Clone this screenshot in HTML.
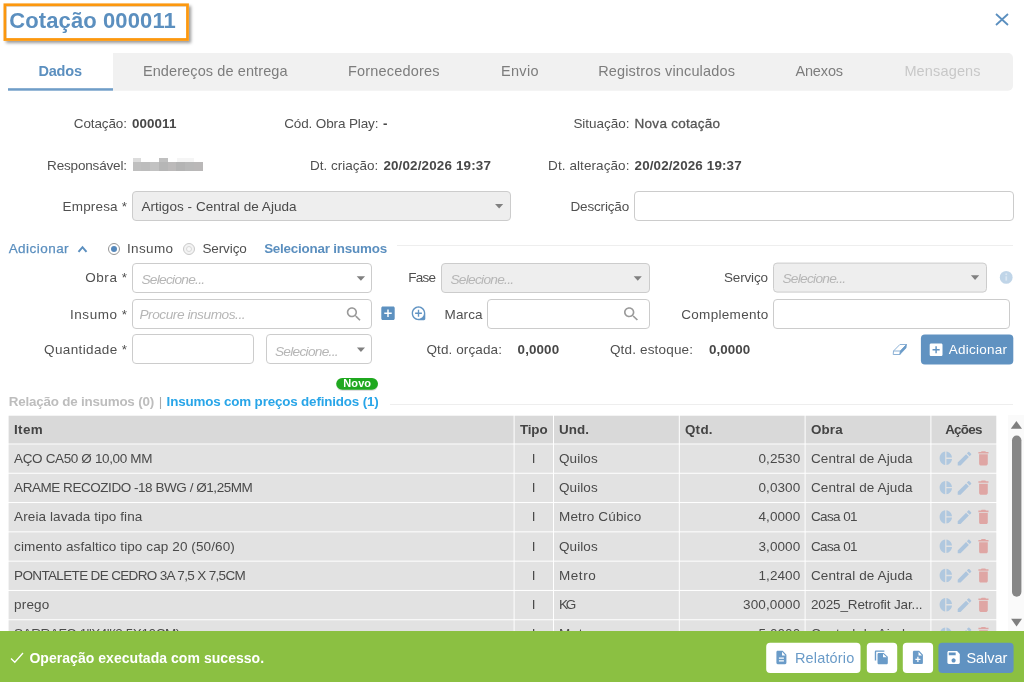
<!DOCTYPE html>
<html lang="pt-BR">
<head>
<meta charset="utf-8">
<title>Cotação 000011</title>
<style>
*{box-sizing:border-box;margin:0;padding:0}
html,body{width:1024px;height:682px;overflow:hidden;background:#fff}
body{position:relative;font-family:"Liberation Sans","DejaVu Sans",sans-serif;font-size:13px;color:#4a4a4a}
.a{position:absolute}
.t{position:absolute;white-space:nowrap;line-height:20px;height:20px}
.focus{left:4px;top:4px;width:185px;height:37px;box-shadow:2px 2px 3px rgba(0,0,0,.4)}
.inp{position:absolute;height:30px;border:1px solid #ccc;border-radius:4px;background:#fff}
.dis{background:#eee}
.hr{position:absolute;height:1px;background:#eee}
.footer{left:0;top:631px;width:1024px;height:51px;background:#8bc042}
</style>
</head>
<body>
<div id="root" style="position:absolute;left:0;top:0;width:1024px;height:682px;will-change:transform">

<!-- header -->
<div class="a focus"></div>
<svg class="a" style="left:0;top:0" width="200" height="50" viewBox="0 0 200 50"><rect x="4.900" y="4.800" width="182.600" height="34.700" fill="#fff" stroke="#fc980f" stroke-width="2.800"/><path d="M6.400 38 V6.500 H186" fill="none" stroke="rgba(0,0,0,.10)" stroke-width="1"/></svg>
<svg class="a" style="left:995px;top:13px" width="14" height="13" viewBox="0 0 14 13"><path d="M1 1 L13 12 M13 1 L1 12" stroke="#5b8fbf" stroke-width="1.8" fill="none"/></svg>

<!-- tabs -->
<svg class="a" style="left:0;top:40px" width="1024" height="60" viewBox="0 40 1024 60"><path d="M113 53.100 H1008 a5 5 0 0 1 5 5 V85.700 a5 5 0 0 1 -5 5 H113 Z" fill="#f1f1f1"/><rect x="8" y="88.200" width="105" height="2.500" fill="#6f9dc8"/></svg>

<!-- redacted name -->
<div class="a" style="left:133px;top:162px;width:70px;height:9px;background:linear-gradient(90deg,#bfbfbf 0 12%,#bdbdbd 12% 25%,#c2c2c2 25% 37%,#b6b6b6 37% 50%,#bcbaba 50% 62%,#b4b4b4 62% 75%,#b8b8b8 75% 87%,#bab8b8 87%)"></div>
<div class="a" style="left:133px;top:158px;width:8px;height:4px;background:#dcdcdc"></div>
<div class="a" style="left:159px;top:158px;width:9px;height:4px;background:#c0c0c0"></div>
<div class="a" style="left:177px;top:158px;width:17px;height:4px;background:#f5f5f5"></div>

<!-- row 3 -->
<div class="inp dis" style="left:132px;top:190.500px;width:379px"></div>
<div class="inp" style="left:634px;top:190.500px;width:380px"></div>

<!-- adicionar section -->
<div class="hr" style="left:397px;top:245px;width:616px"></div>
<svg class="a" style="left:77px;top:244px" width="11" height="10" viewBox="0 0 11 10"><path d="M1.500 7.800 L5.500 3.200 L9.500 7.800" stroke="#5b8fbf" stroke-width="2" fill="none"/></svg>
<div class="a" style="left:108px;top:243px;width:12px;height:12px;border:1px solid #959595;border-radius:50%;background:#fff"></div>
<div class="a" style="left:111px;top:246px;width:6px;height:6px;border-radius:50%;background:#5588bb"></div>
<div class="a" style="left:183px;top:243px;width:12px;height:12px;border:1px solid #c8c8c8;border-radius:50%;background:#f3f3f3"></div>
<div class="a" style="left:186px;top:246px;width:6px;height:6px;border:1px solid #d8d8d8;border-radius:50%;background:#f8f8f8"></div>

<!-- obra row -->
<div class="inp" style="left:132px;top:263px;width:240px"></div>
<div class="inp dis" style="left:441px;top:263px;width:209px"></div>
<svg class="a" style="left:770px;top:258px" width="222" height="40" viewBox="770 258 222 40"><rect x="773.500" y="263.100" width="213" height="29" rx="3.500" fill="#eee" stroke="#ccc" stroke-width="1"/></svg>

<!-- insumo row -->
<div class="inp" style="left:132px;top:299px;width:240px"></div>
<div class="inp" style="left:487px;top:299px;width:163px"></div>
<div class="inp" style="left:773px;top:299px;width:237px"></div>

<!-- quantidade row -->
<div class="inp" style="left:132px;top:334px;width:122px"></div>
<div class="inp" style="left:266px;top:334px;width:106px"></div>

<svg class="a" style="left:0;top:0" width="1024" height="400" viewBox="0 0 1024 400">
<path transform="matrix(0.7444 0 0 0.7556 379.067 304.233)" d="M19 3H5c-1.110 0-2 .900-2 2v14c0 1.100.890 2 2 2h14c1.100 0 2-.900 2-2V5c0-1.100-.900-2-2-2zm-2 10h-4v4h-2v-4H7v-2h4V7h2v4h4v2z" fill="#5d91c0"/>
<path transform="matrix(0.6800 0 0 0.6950 410.340 304.910)" d="M13 7h-2v4H7v2h4v4h2v-4h4v-2h-4V7zm-1-5C6.490 2 2 6.490 2 12s4.490 10 10 10h8c1.100 0 2-.900 2-2v-8c0-5.510-4.490-10-10-10zm0 18c-4.410 0-8-3.590-8-8s3.590-8 8-8 8 3.590 8 8-3.590 8-8 8z" fill="#6194c3"/>
<path transform="matrix(0.7890 0 0 0.7776 344.433 304.867)" d="M15.500 14h-.790l-.280-.270C15.410 12.590 16 11.110 16 9.500 16 5.910 13.090 3 9.500 3S3 5.910 3 9.500 5.910 16 9.500 16c1.610 0 3.090-.590 4.230-1.570l.270.280v.790l5 4.990L20.490 19l-4.990-5zm-6 0C7.010 14 5 11.990 5 9.500S7.010 5 9.500 5 14 7.010 14 9.500 11.990 14 9.500 14z" fill="#9a9a9a"/>
<path transform="matrix(0.8005 0 0 0.7662 621.599 304.902)" d="M15.500 14h-.790l-.280-.270C15.410 12.590 16 11.110 16 9.500 16 5.910 13.090 3 9.500 3S3 5.910 3 9.500 5.910 16 9.500 16c1.610 0 3.090-.590 4.230-1.570l.270.280v.790l5 4.990L20.490 19l-4.990-5zm-6 0C7.010 14 5 11.990 5 9.500S7.010 5 9.500 5 14 7.010 14 9.500 11.990 14 9.500 14z" fill="#9a9a9a"/>
<rect x="920.9" y="334.4" width="92.4" height="30.1" rx="4" fill="#6092c1"/>
<path transform="matrix(0.7111 0 0 0.7056 927.567 341.283)" d="M19 3H5c-1.110 0-2 .900-2 2v14c0 1.100.890 2 2 2h14c1.100 0 2-.900 2-2V5c0-1.100-.900-2-2-2zm-2 10h-4v4h-2v-4H7v-2h4V7h2v4h4v2z" fill="#fff"/>
<path d="M899.90 344.50 L906.50 344.50 L900.40 351.00 L893.50 351.00 Z M893.50 351.00 L893.20 354.50 L899.90 354.50 L900.40 351.00" fill="none" stroke="#8db2d6" stroke-width="1" stroke-linejoin="round"/>
<path d="M906.50 344.50 L906.10 347.90 L899.90 354.50 L900.40 351.00 Z" fill="#6a9bc8" stroke="#6a9bc8" stroke-width=".6" stroke-linejoin="round"/>
<path d="M495.05 204.05 H503.20 L499.12 208.55 Z" fill="#808080"/>
<path d="M356.70 276.20 H365.10 L360.90 280.80 Z" fill="#808080"/>
<path d="M633.70 276.15 H641.80 L637.75 280.80 Z" fill="#808080"/>
<path d="M970.90 275.20 H979.20 L975.05 279.90 Z" fill="#808080"/>
<path d="M356.90 347.60 H365.00 L360.95 352.10 Z" fill="#808080"/>
<circle cx="1006.2" cy="277.4" r="6.4" fill="#c0d5e8"/><rect x="1005.4" y="276.3" width="1.7" height="4.3" fill="#dbe7f2"/><circle cx="1006.25" cy="274.3" r="1" fill="#dbe7f2"/>
</svg>

<!-- list header -->
<svg class="a" style="left:330px;top:372px" width="54" height="24" viewBox="330 372 54 24"><rect x="336.400" y="379" width="41.600" height="12" rx="6" fill="rgba(0,0,0,.13)"/><rect x="336.200" y="377.900" width="41.800" height="11.900" rx="5.950" fill="#1fa81f"/></svg>
<div class="hr" style="left:390px;top:404px;width:623px"></div>

<!-- grid -->
<svg class="a" style="left:0;top:0" width="1024" height="682" viewBox="0 0 1024 682">
<rect x="8.6" y="415.7" width="505.0" height="27.8" fill="#d9d9d9"/>
<rect x="514.6" y="415.7" width="38.4" height="27.8" fill="#d9d9d9"/>
<rect x="554.0" y="415.7" width="124.8" height="27.8" fill="#d9d9d9"/>
<rect x="679.8" y="415.7" width="124.8" height="27.8" fill="#d9d9d9"/>
<rect x="805.6" y="415.7" width="124.8" height="27.8" fill="#d9d9d9"/>
<rect x="931.4" y="415.7" width="64.9" height="27.8" fill="#d9d9d9"/>
<rect x="8.6" y="444.45" width="505.0" height="28.3" fill="#e2e2e2"/>
<rect x="514.6" y="444.45" width="38.4" height="28.3" fill="#e2e2e2"/>
<rect x="554.0" y="444.45" width="124.8" height="28.3" fill="#e2e2e2"/>
<rect x="679.8" y="444.45" width="124.8" height="28.3" fill="#e2e2e2"/>
<rect x="805.6" y="444.45" width="124.8" height="28.3" fill="#e2e2e2"/>
<rect x="931.4" y="444.45" width="64.9" height="28.3" fill="#e2e2e2"/>
<path transform="matrix(0.6200 0 0 0.6700 938.360 450.260)" d="M11 2v20c-5.070-.500-9-4.790-9-10s3.930-9.500 9-10zm2.030 0v8.990H22c-.470-4.740-4.240-8.520-8.970-8.990zm0 11.010V22c4.740-.470 8.500-4.250 8.970-8.990h-8.970z" fill="#b0c8df"/>
<path transform="matrix(0.7556 0 0 0.7611 955.433 449.417)" d="M3 17.250V21h3.750L17.810 9.940l-3.750-3.750L3 17.250zM20.710 7.040c.390-.390.390-1.020 0-1.410l-2.340-2.340c-.390-.390-1.020-.390-1.410 0l-1.830 1.830 3.750 3.750 1.830-1.830z" fill="#adc5dd"/>
<path transform="matrix(0.7214 0 0 0.7889 974.793 448.833)" d="M6 19c0 1.100.900 2 2 2h8c1.100 0 2-.900 2-2V7H6v12zM19 4h-3.500l-1-1h-5l-1 1H5v2h14V4z" fill="#dfa6a4"/>
<rect x="8.6" y="473.75" width="505.0" height="28.3" fill="#e2e2e2"/>
<rect x="514.6" y="473.75" width="38.4" height="28.3" fill="#e2e2e2"/>
<rect x="554.0" y="473.75" width="124.8" height="28.3" fill="#e2e2e2"/>
<rect x="679.8" y="473.75" width="124.8" height="28.3" fill="#e2e2e2"/>
<rect x="805.6" y="473.75" width="124.8" height="28.3" fill="#e2e2e2"/>
<rect x="931.4" y="473.75" width="64.9" height="28.3" fill="#e2e2e2"/>
<path transform="matrix(0.6200 0 0 0.6700 938.360 479.560)" d="M11 2v20c-5.070-.500-9-4.790-9-10s3.930-9.500 9-10zm2.030 0v8.990H22c-.470-4.740-4.240-8.520-8.970-8.990zm0 11.010V22c4.740-.470 8.500-4.250 8.970-8.990h-8.970z" fill="#b0c8df"/>
<path transform="matrix(0.7556 0 0 0.7611 955.433 478.717)" d="M3 17.250V21h3.750L17.810 9.940l-3.750-3.750L3 17.250zM20.710 7.040c.390-.390.390-1.020 0-1.410l-2.340-2.340c-.390-.390-1.020-.390-1.410 0l-1.830 1.830 3.750 3.750 1.830-1.830z" fill="#adc5dd"/>
<path transform="matrix(0.7214 0 0 0.7889 974.793 478.133)" d="M6 19c0 1.100.900 2 2 2h8c1.100 0 2-.900 2-2V7H6v12zM19 4h-3.500l-1-1h-5l-1 1H5v2h14V4z" fill="#dfa6a4"/>
<rect x="8.6" y="503.05" width="505.0" height="28.3" fill="#e2e2e2"/>
<rect x="514.6" y="503.05" width="38.4" height="28.3" fill="#e2e2e2"/>
<rect x="554.0" y="503.05" width="124.8" height="28.3" fill="#e2e2e2"/>
<rect x="679.8" y="503.05" width="124.8" height="28.3" fill="#e2e2e2"/>
<rect x="805.6" y="503.05" width="124.8" height="28.3" fill="#e2e2e2"/>
<rect x="931.4" y="503.05" width="64.9" height="28.3" fill="#e2e2e2"/>
<path transform="matrix(0.6200 0 0 0.6700 938.360 508.860)" d="M11 2v20c-5.070-.500-9-4.790-9-10s3.930-9.500 9-10zm2.030 0v8.990H22c-.470-4.740-4.240-8.520-8.970-8.990zm0 11.010V22c4.740-.470 8.500-4.250 8.970-8.990h-8.970z" fill="#b0c8df"/>
<path transform="matrix(0.7556 0 0 0.7611 955.433 508.017)" d="M3 17.250V21h3.750L17.810 9.940l-3.750-3.750L3 17.250zM20.710 7.040c.390-.390.390-1.020 0-1.410l-2.340-2.340c-.390-.390-1.020-.390-1.410 0l-1.830 1.830 3.750 3.750 1.830-1.830z" fill="#adc5dd"/>
<path transform="matrix(0.7214 0 0 0.7889 974.793 507.433)" d="M6 19c0 1.100.900 2 2 2h8c1.100 0 2-.900 2-2V7H6v12zM19 4h-3.500l-1-1h-5l-1 1H5v2h14V4z" fill="#dfa6a4"/>
<rect x="8.6" y="532.35" width="505.0" height="28.3" fill="#e2e2e2"/>
<rect x="514.6" y="532.35" width="38.4" height="28.3" fill="#e2e2e2"/>
<rect x="554.0" y="532.35" width="124.8" height="28.3" fill="#e2e2e2"/>
<rect x="679.8" y="532.35" width="124.8" height="28.3" fill="#e2e2e2"/>
<rect x="805.6" y="532.35" width="124.8" height="28.3" fill="#e2e2e2"/>
<rect x="931.4" y="532.35" width="64.9" height="28.3" fill="#e2e2e2"/>
<path transform="matrix(0.6200 0 0 0.6700 938.360 538.160)" d="M11 2v20c-5.070-.500-9-4.790-9-10s3.930-9.500 9-10zm2.030 0v8.990H22c-.470-4.740-4.240-8.520-8.970-8.990zm0 11.010V22c4.740-.470 8.500-4.250 8.970-8.990h-8.970z" fill="#b0c8df"/>
<path transform="matrix(0.7556 0 0 0.7611 955.433 537.317)" d="M3 17.250V21h3.750L17.810 9.940l-3.750-3.750L3 17.250zM20.710 7.040c.390-.390.390-1.020 0-1.410l-2.340-2.340c-.390-.390-1.020-.390-1.410 0l-1.830 1.830 3.750 3.750 1.830-1.830z" fill="#adc5dd"/>
<path transform="matrix(0.7214 0 0 0.7889 974.793 536.733)" d="M6 19c0 1.100.900 2 2 2h8c1.100 0 2-.900 2-2V7H6v12zM19 4h-3.500l-1-1h-5l-1 1H5v2h14V4z" fill="#dfa6a4"/>
<rect x="8.6" y="561.65" width="505.0" height="28.3" fill="#e2e2e2"/>
<rect x="514.6" y="561.65" width="38.4" height="28.3" fill="#e2e2e2"/>
<rect x="554.0" y="561.65" width="124.8" height="28.3" fill="#e2e2e2"/>
<rect x="679.8" y="561.65" width="124.8" height="28.3" fill="#e2e2e2"/>
<rect x="805.6" y="561.65" width="124.8" height="28.3" fill="#e2e2e2"/>
<rect x="931.4" y="561.65" width="64.9" height="28.3" fill="#e2e2e2"/>
<path transform="matrix(0.6200 0 0 0.6700 938.360 567.460)" d="M11 2v20c-5.070-.500-9-4.790-9-10s3.930-9.500 9-10zm2.030 0v8.990H22c-.470-4.740-4.240-8.520-8.970-8.990zm0 11.010V22c4.740-.470 8.500-4.250 8.970-8.990h-8.970z" fill="#b0c8df"/>
<path transform="matrix(0.7556 0 0 0.7611 955.433 566.617)" d="M3 17.250V21h3.750L17.810 9.940l-3.750-3.750L3 17.250zM20.710 7.040c.390-.390.390-1.020 0-1.410l-2.340-2.340c-.390-.390-1.020-.390-1.410 0l-1.830 1.830 3.750 3.750 1.830-1.830z" fill="#adc5dd"/>
<path transform="matrix(0.7214 0 0 0.7889 974.793 566.033)" d="M6 19c0 1.100.900 2 2 2h8c1.100 0 2-.900 2-2V7H6v12zM19 4h-3.500l-1-1h-5l-1 1H5v2h14V4z" fill="#dfa6a4"/>
<rect x="8.6" y="590.95" width="505.0" height="28.3" fill="#e2e2e2"/>
<rect x="514.6" y="590.95" width="38.4" height="28.3" fill="#e2e2e2"/>
<rect x="554.0" y="590.95" width="124.8" height="28.3" fill="#e2e2e2"/>
<rect x="679.8" y="590.95" width="124.8" height="28.3" fill="#e2e2e2"/>
<rect x="805.6" y="590.95" width="124.8" height="28.3" fill="#e2e2e2"/>
<rect x="931.4" y="590.95" width="64.9" height="28.3" fill="#e2e2e2"/>
<path transform="matrix(0.6200 0 0 0.6700 938.360 596.760)" d="M11 2v20c-5.070-.500-9-4.790-9-10s3.930-9.500 9-10zm2.030 0v8.990H22c-.470-4.740-4.240-8.520-8.970-8.990zm0 11.010V22c4.740-.470 8.500-4.250 8.970-8.990h-8.970z" fill="#b0c8df"/>
<path transform="matrix(0.7556 0 0 0.7611 955.433 595.917)" d="M3 17.250V21h3.750L17.810 9.940l-3.750-3.750L3 17.250zM20.710 7.040c.390-.390.390-1.020 0-1.410l-2.340-2.340c-.390-.390-1.020-.390-1.410 0l-1.830 1.830 3.750 3.750 1.830-1.830z" fill="#adc5dd"/>
<path transform="matrix(0.7214 0 0 0.7889 974.793 595.333)" d="M6 19c0 1.100.900 2 2 2h8c1.100 0 2-.900 2-2V7H6v12zM19 4h-3.500l-1-1h-5l-1 1H5v2h14V4z" fill="#dfa6a4"/>
<rect x="8.6" y="620.25" width="505.0" height="28.3" fill="#e2e2e2"/>
<rect x="514.6" y="620.25" width="38.4" height="28.3" fill="#e2e2e2"/>
<rect x="554.0" y="620.25" width="124.8" height="28.3" fill="#e2e2e2"/>
<rect x="679.8" y="620.25" width="124.8" height="28.3" fill="#e2e2e2"/>
<rect x="805.6" y="620.25" width="124.8" height="28.3" fill="#e2e2e2"/>
<rect x="931.4" y="620.25" width="64.9" height="28.3" fill="#e2e2e2"/>
<path transform="matrix(0.6200 0 0 0.6700 938.360 626.060)" d="M11 2v20c-5.070-.500-9-4.790-9-10s3.930-9.500 9-10zm2.030 0v8.990H22c-.470-4.740-4.240-8.520-8.970-8.990zm0 11.010V22c4.740-.470 8.500-4.250 8.970-8.990h-8.970z" fill="#b0c8df"/>
<path transform="matrix(0.7556 0 0 0.7611 955.433 625.217)" d="M3 17.250V21h3.750L17.810 9.940l-3.750-3.750L3 17.250zM20.710 7.040c.390-.390.390-1.020 0-1.410l-2.340-2.340c-.390-.390-1.020-.390-1.410 0l-1.830 1.830 3.750 3.750 1.830-1.830z" fill="#adc5dd"/>
<path transform="matrix(0.7214 0 0 0.7889 974.793 624.633)" d="M6 19c0 1.100.900 2 2 2h8c1.100 0 2-.900 2-2V7H6v12zM19 4h-3.500l-1-1h-5l-1 1H5v2h14V4z" fill="#dfa6a4"/>
</svg>

<div class="t" style="left:9.20px;top:10.50px;font-size:22px;color:#5b8fbf;font-weight:bold;letter-spacing:0.115px;">Cotação 000011</div>
<div class="t" style="left:38.40px;top:61.00px;font-size:14.5px;color:#5b8fbf;font-weight:bold;letter-spacing:-0.182px;">Dados</div>
<div class="t" style="left:142.90px;top:61.00px;font-size:14.5px;color:#7d7d7d;letter-spacing:0.106px;">Endereços de entrega</div>
<div class="t" style="left:347.90px;top:61.00px;font-size:14.5px;color:#7d7d7d;letter-spacing:0.203px;">Fornecedores</div>
<div class="t" style="left:500.90px;top:61.00px;font-size:14.5px;color:#7d7d7d;letter-spacing:0.355px;">Envio</div>
<div class="t" style="left:598.20px;top:61.00px;font-size:14.5px;color:#7d7d7d;letter-spacing:0.153px;">Registros vinculados</div>
<div class="t" style="left:795.40px;top:61.00px;font-size:14.5px;color:#7d7d7d;letter-spacing:-0.135px;">Anexos</div>
<div class="t" style="left:904.40px;top:61.00px;font-size:14.5px;color:#c8c8c8;letter-spacing:0.154px;">Mensagens</div>
<div class="t" style="left:73.80px;top:113.50px;font-size:13.5px;color:#505050;letter-spacing:-0.121px;">Cotação:</div>
<div class="t" style="left:131.90px;top:113.50px;font-size:13.4px;color:#484848;font-weight:bold;letter-spacing:0.099px;">000011</div>
<div class="t" style="left:284.20px;top:113.50px;font-size:13.5px;color:#505050;letter-spacing:-0.132px;">Cód. Obra Play:</div>
<div class="t" style="left:382.90px;top:113.50px;font-size:13.4px;color:#484848;font-weight:bold;">-</div>
<div class="t" style="left:573.40px;top:113.50px;font-size:13.5px;color:#505050;letter-spacing:-0.037px;">Situação:</div>
<div class="t" style="left:634.60px;top:113.50px;font-size:13.5px;color:#555;-webkit-text-stroke:.3px #555;letter-spacing:0.258px;">Nova cotação</div>
<div class="t" style="left:47.05px;top:155.50px;font-size:13.5px;color:#505050;letter-spacing:-0.169px;">Responsável:</div>
<div class="t" style="left:309.95px;top:155.50px;font-size:13.5px;color:#505050;letter-spacing:0.015px;">Dt. criação:</div>
<div class="t" style="left:383.40px;top:155.50px;font-size:13.4px;color:#484848;font-weight:bold;letter-spacing:0.163px;">20/02/2026 19:37</div>
<div class="t" style="left:548.10px;top:155.50px;font-size:13.5px;color:#505050;letter-spacing:0.077px;">Dt. alteração:</div>
<div class="t" style="left:634.60px;top:155.50px;font-size:13.4px;color:#484848;font-weight:bold;letter-spacing:0.133px;">20/02/2026 19:37</div>
<div class="t" style="left:62.55px;top:196.50px;font-size:13.5px;color:#505050;letter-spacing:0.177px;">Empresa *</div>
<div class="t" style="left:141.40px;top:196.50px;font-size:13.5px;color:#4a4a4a;letter-spacing:0.054px;">Artigos - Central de Ajuda</div>
<div class="t" style="left:570.50px;top:196.50px;font-size:13.5px;color:#505050;letter-spacing:-0.166px;">Descrição</div>
<div class="t" style="left:8.65px;top:238.50px;font-size:13.5px;color:#5b8fbf;-webkit-text-stroke:.25px #5b8fbf;letter-spacing:0.459px;">Adicionar</div>
<div class="t" style="left:126.90px;top:238.50px;font-size:13.5px;color:#505050;letter-spacing:0.384px;">Insumo</div>
<div class="t" style="left:202.40px;top:238.50px;font-size:13.5px;color:#505050;letter-spacing:-0.094px;">Serviço</div>
<div class="t" style="left:264.15px;top:238.50px;font-size:13.4px;color:#5b8fbf;font-weight:bold;letter-spacing:-0.210px;">Selecionar insumos</div>
<div class="t" style="left:85.30px;top:267.50px;font-size:13.5px;color:#505050;letter-spacing:0.534px;">Obra *</div>
<div class="t" style="left:141.40px;top:269.50px;font-size:13.7px;color:#b6b6b6;font-style:italic;letter-spacing:-0.712px;">Selecione...</div>
<div class="t" style="left:408.20px;top:267.50px;font-size:13.5px;color:#505050;letter-spacing:-0.705px;">Fase</div>
<div class="t" style="left:450.40px;top:269.50px;font-size:13.7px;color:#b6b6b6;font-style:italic;letter-spacing:-0.712px;">Selecione...</div>
<div class="t" style="left:723.90px;top:267.50px;font-size:13.5px;color:#505050;letter-spacing:-0.136px;">Serviço</div>
<div class="t" style="left:782.40px;top:268.50px;font-size:13.7px;color:#b6b6b6;font-style:italic;letter-spacing:-0.712px;">Selecione...</div>
<div class="t" style="left:70.05px;top:304.50px;font-size:13.5px;color:#505050;letter-spacing:0.524px;">Insumo *</div>
<div class="t" style="left:139.40px;top:304.50px;font-size:13.7px;color:#b6b6b6;font-style:italic;letter-spacing:-0.465px;">Procure insumos...</div>
<div class="t" style="left:444.60px;top:304.50px;font-size:13.5px;color:#505050;letter-spacing:0.096px;">Marca</div>
<div class="t" style="left:681.20px;top:304.50px;font-size:13.5px;color:#505050;letter-spacing:0.315px;">Complemento</div>
<div class="t" style="left:44.05px;top:339.50px;font-size:13.5px;color:#505050;letter-spacing:0.376px;">Quantidade *</div>
<div class="t" style="left:274.90px;top:341.50px;font-size:13.7px;color:#b6b6b6;font-style:italic;letter-spacing:-0.712px;">Selecione...</div>
<div class="t" style="left:426.50px;top:339.50px;font-size:13.5px;color:#505050;letter-spacing:0.100px;">Qtd. orçada:</div>
<div class="t" style="left:517.60px;top:339.50px;font-size:13.4px;color:#484848;font-weight:bold;letter-spacing:0.106px;">0,0000</div>
<div class="t" style="left:609.90px;top:339.50px;font-size:13.5px;color:#505050;letter-spacing:0.170px;">Qtd. estoque:</div>
<div class="t" style="left:708.90px;top:339.50px;font-size:13.4px;color:#484848;font-weight:bold;letter-spacing:0.086px;">0,0000</div>
<div class="t" style="left:948.80px;top:339.50px;font-size:13.5px;color:#fff;letter-spacing:0.240px;">Adicionar</div>
<div class="t" style="left:343.35px;top:373.00px;font-size:11px;color:#fff;font-weight:bold;letter-spacing:0.067px;">Novo</div>
<div class="t" style="left:8.80px;top:391.50px;font-size:13.4px;color:#bdbdbd;font-weight:bold;letter-spacing:-0.204px;">Relação de insumos (0)</div>
<div class="t" style="left:158.70px;top:391.50px;font-size:13.5px;color:#aaa;">|</div>
<div class="t" style="left:166.60px;top:391.50px;font-size:13.4px;color:#28a5e8;font-weight:bold;letter-spacing:-0.167px;">Insumos com preços definidos (1)</div>
<div class="t" style="left:13.90px;top:419.50px;font-size:13.4px;color:#444;font-weight:bold;letter-spacing:0.451px;">Item</div>
<div class="t" style="left:520.00px;top:419.50px;font-size:13.4px;color:#444;font-weight:bold;letter-spacing:-0.144px;">Tipo</div>
<div class="t" style="left:559.00px;top:419.50px;font-size:13.4px;color:#444;font-weight:bold;letter-spacing:0.050px;">Und.</div>
<div class="t" style="left:684.90px;top:419.50px;font-size:13.4px;color:#444;font-weight:bold;letter-spacing:0.306px;">Qtd.</div>
<div class="t" style="left:810.90px;top:419.50px;font-size:13.4px;color:#444;font-weight:bold;letter-spacing:0.145px;">Obra</div>
<div class="t" style="left:945.20px;top:419.50px;font-size:13.4px;color:#444;font-weight:bold;letter-spacing:-0.751px;">Ações</div>
<div class="t" style="left:14.10px;top:448.50px;font-size:13.5px;color:#4a4a4a;letter-spacing:-0.362px;">AÇO CA50 Ø 10,00 MM</div>
<div class="t" style="left:531.72px;top:448.50px;font-size:13.5px;color:#4a4a4a;">I</div>
<div class="t" style="left:559.00px;top:448.50px;font-size:13.5px;color:#4a4a4a;letter-spacing:0.087px;">Quilos</div>
<div class="t" style="left:758.50px;top:448.50px;font-size:13.5px;color:#4a4a4a;letter-spacing:0.081px;">0,2530</div>
<div class="t" style="left:810.90px;top:448.50px;font-size:13.5px;color:#4a4a4a;letter-spacing:0.125px;">Central de Ajuda</div>
<div class="t" style="left:14.10px;top:477.50px;font-size:13.5px;color:#4a4a4a;letter-spacing:-0.455px;">ARAME RECOZIDO -18 BWG / Ø1,25MM</div>
<div class="t" style="left:531.72px;top:477.50px;font-size:13.5px;color:#4a4a4a;">I</div>
<div class="t" style="left:559.00px;top:477.50px;font-size:13.5px;color:#4a4a4a;letter-spacing:0.087px;">Quilos</div>
<div class="t" style="left:758.50px;top:477.50px;font-size:13.5px;color:#4a4a4a;letter-spacing:0.081px;">0,0300</div>
<div class="t" style="left:810.90px;top:477.50px;font-size:13.5px;color:#4a4a4a;letter-spacing:0.125px;">Central de Ajuda</div>
<div class="t" style="left:14.10px;top:506.50px;font-size:13.5px;color:#4a4a4a;letter-spacing:0.100px;">Areia lavada tipo fina</div>
<div class="t" style="left:531.72px;top:506.50px;font-size:13.5px;color:#4a4a4a;">I</div>
<div class="t" style="left:559.00px;top:506.50px;font-size:13.5px;color:#4a4a4a;letter-spacing:0.173px;">Metro Cúbico</div>
<div class="t" style="left:758.50px;top:506.50px;font-size:13.5px;color:#4a4a4a;letter-spacing:0.081px;">4,0000</div>
<div class="t" style="left:810.90px;top:506.50px;font-size:13.5px;color:#4a4a4a;letter-spacing:-0.599px;">Casa 01</div>
<div class="t" style="left:14.10px;top:536.50px;font-size:13.5px;color:#4a4a4a;letter-spacing:0.106px;">cimento asfaltico tipo cap 20 (50/60)</div>
<div class="t" style="left:531.72px;top:536.50px;font-size:13.5px;color:#4a4a4a;">I</div>
<div class="t" style="left:559.00px;top:536.50px;font-size:13.5px;color:#4a4a4a;letter-spacing:0.087px;">Quilos</div>
<div class="t" style="left:758.50px;top:536.50px;font-size:13.5px;color:#4a4a4a;letter-spacing:0.081px;">3,0000</div>
<div class="t" style="left:810.90px;top:536.50px;font-size:13.5px;color:#4a4a4a;letter-spacing:-0.599px;">Casa 01</div>
<div class="t" style="left:14.10px;top:565.50px;font-size:13.5px;color:#4a4a4a;letter-spacing:-0.652px;">PONTALETE DE CEDRO 3A 7,5 X 7,5CM</div>
<div class="t" style="left:531.72px;top:565.50px;font-size:13.5px;color:#4a4a4a;">I</div>
<div class="t" style="left:559.00px;top:565.50px;font-size:13.5px;color:#4a4a4a;letter-spacing:0.546px;">Metro</div>
<div class="t" style="left:758.50px;top:565.50px;font-size:13.5px;color:#4a4a4a;letter-spacing:0.081px;">1,2400</div>
<div class="t" style="left:810.90px;top:565.50px;font-size:13.5px;color:#4a4a4a;letter-spacing:0.125px;">Central de Ajuda</div>
<div class="t" style="left:14.10px;top:594.50px;font-size:13.5px;color:#4a4a4a;letter-spacing:0.167px;">prego</div>
<div class="t" style="left:531.72px;top:594.50px;font-size:13.5px;color:#4a4a4a;">I</div>
<div class="t" style="left:559.00px;top:594.50px;font-size:13.5px;color:#4a4a4a;letter-spacing:-2.316px;">KG</div>
<div class="t" style="left:743.00px;top:594.50px;font-size:13.5px;color:#4a4a4a;letter-spacing:0.127px;">300,0000</div>
<div class="t" style="left:810.90px;top:594.50px;font-size:13.5px;color:#4a4a4a;letter-spacing:-0.125px;">2025_Retrofit Jar...</div>
<div class="t" style="left:14.10px;top:623.50px;font-size:13.5px;color:#4a4a4a;letter-spacing:-0.418px;">SARRAFO 1&quot;X4&quot;(2,5X10CM)</div>
<div class="t" style="left:531.72px;top:623.50px;font-size:13.5px;color:#4a4a4a;">I</div>
<div class="t" style="left:559.00px;top:623.50px;font-size:13.5px;color:#4a4a4a;letter-spacing:0.546px;">Metro</div>
<div class="t" style="left:758.50px;top:623.50px;font-size:13.5px;color:#4a4a4a;letter-spacing:0.081px;">5,0000</div>
<div class="t" style="left:810.90px;top:623.50px;font-size:13.5px;color:#4a4a4a;letter-spacing:0.125px;">Central de Ajuda</div>

<!-- scrollbar -->
<svg class="a" style="left:1000px;top:410px" width="24" height="225" viewBox="1000 410 24 225"><rect x="1008" y="415" width="16" height="217" fill="#fafafa"/><path d="M1010.800 428.800 L1016.400 421 L1022 428.800 Z" fill="#7f7f7f"/><rect x="1012" y="435.500" width="9.400" height="161.200" rx="4.700" fill="#868686"/><path d="M1011.100 618.800 H1022 L1016.550 626.400 Z" fill="#7f7f7f"/></svg>

<!-- footer -->
<div class="a footer"></div>
<svg class="a" style="left:9.600px;top:650.600px" width="14" height="13" viewBox="0 0 14 13"><path d="M1 7.500 L4.800 11.300 L13 2" stroke="#fff" stroke-width="1.300" fill="none"/></svg>

<svg class="a" style="left:0;top:0" width="1024" height="682" viewBox="0 0 1024 682">
<rect x="766.2" y="642.8" width="94.3" height="30.2" rx="4" fill="#fff"/>
<rect x="866.8" y="642.8" width="30.4" height="30.2" rx="4" fill="#fff"/>
<rect x="902.8" y="642.8" width="30.3" height="30.2" rx="4" fill="#fff"/>
<rect x="938.4" y="642.8" width="75.2" height="30.2" rx="4" fill="#6092c1"/>
<path transform="matrix(0.6250 0 0 0.6700 773.900 649.460)" d="M14 2H6c-1.100 0-1.990.900-1.990 2L4 20c0 1.100.890 2 1.990 2H18c1.100 0 2-.900 2-2V8l-6-6zm2 16H8v-2h8v2zm0-4H8v-2h8v2zm-3-5V3.500L18.500 9H13z" fill="#6a9bc8"/>
<path transform="matrix(0.6842 0 0 0.6273 873.432 649.773)" d="M16 1H4c-1.100 0-2 .900-2 2v14h2V3h12V1zm-1 4l6 6v10c0 1.100-.900 2-2 2H7.990C6.890 23 6 22.100 6 21l.010-14c0-1.100.890-2 1.990-2h7zm-1 7h5.500L14 6.500V12z" fill="#6a9bc8"/>
<path transform="matrix(0.6250 0 0 0.6700 910.400 649.360)" d="M14 2H6c-1.100 0-1.990.900-1.990 2L4 20c0 1.100.890 2 1.990 2H18c1.100 0 2-.900 2-2V8l-6-6zm2 14h-3v3h-2v-3H8v-2h3v-3h2v3h3v2zm-3-7V3.500L18.500 9H13z" fill="#6a9bc8"/>
<path transform="matrix(0.6889 0 0 0.7222 945.333 648.833)" d="M17 3H5c-1.110 0-2 .900-2 2v14c0 1.100.890 2 2 2h14c1.100 0 2-.900 2-2V7l-4-4zm-5 16c-1.660 0-3-1.340-3-3s1.340-3 3-3 3 1.340 3 3-1.340 3-3 3zm3-10H5V5h10v4z" fill="#fff"/>
</svg>
<div class="t" style="left:29.40px;top:648.00px;font-size:14px;color:#fff;font-weight:bold;letter-spacing:0.042px;">Operação executada com sucesso.</div>
<div class="t" style="left:795.00px;top:648.00px;font-size:14.5px;color:#6a9bc8;letter-spacing:0.146px;">Relatório</div>
<div class="t" style="left:966.40px;top:648.00px;font-size:14.5px;color:#fff;letter-spacing:-0.042px;">Salvar</div>

</div>
</body>
</html>
